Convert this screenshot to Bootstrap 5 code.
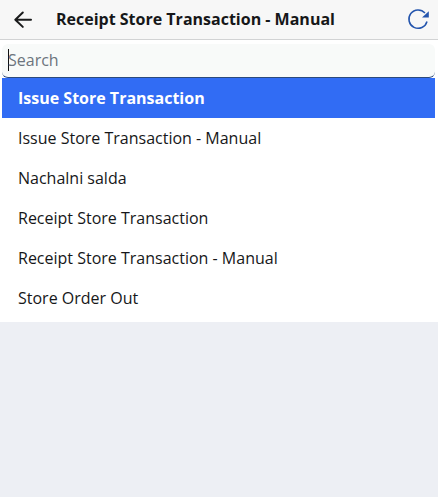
<!DOCTYPE html>
<html lang="en">
<head>
<meta charset="utf-8">
<meta name="viewport" content="width=device-width, initial-scale=1">
<title>Receipt Store Transaction - Manual</title>
<link href="https://cdn.jsdelivr.net/npm/bootstrap@5.3.0/dist/css/bootstrap.min.css" rel="stylesheet">
<style>
body { background: #edeff4; color: #161719; font: 16px/24px "Open Sans", "Noto Sans", sans-serif; min-height: 100vh; overflow: hidden; }
.top-bar { height: 40px; background: #f7f7f7; border-bottom: 1px solid #d2d3d4; padding: 0 7px 1px 12px; }
.top-title { font-size: 16px; line-height: 24px; margin-left: 21px; }
.picker { height: 282px; padding: 4px 3px 4px 2px; }
.search-box { height: 34px; background: #f8faf9; border-bottom: 1px solid #2c4a7c; border-radius: 6px; padding: 0 0 2px 6px; color: #6c747d; }
.caret { width: 1px; height: 22px; margin-right: -1px; background: #111; }
.choices { --bs-list-group-border-radius: 0; --bs-list-group-action-color: #161719; --bs-list-group-active-bg: #316cf4; }
.choices .list-group-item { height: 40px; padding: 8px 16px; border: 0; color: #161719; }
.choices .list-group-item.active { margin: 0; color: #fff; }
</style>
<script src="https://cdn.jsdelivr.net/npm/bootstrap@5.3.0/dist/js/bootstrap.bundle.min.js"></script>
</head>
<body>
<header class="top-bar d-flex align-items-center">
  <a href="#" class="d-flex text-reset" aria-label="Back">
    <svg width="23" height="24" viewBox="0 0 23 24" fill="none" stroke="#1a1b1c" stroke-width="2" stroke-linecap="round" stroke-linejoin="round"><path d="M10.8 5.5 3.3 12.7 10.8 19.9M3.3 12.7H19"/></svg>
  </a>
  <h1 class="top-title mb-0 fw-bold text-nowrap">Receipt Store Transaction - Manual</h1>
  <a href="#" class="d-flex ms-auto" aria-label="Refresh">
    <svg width="24" height="24" viewBox="0 0 24 24"><path d="M18 6A9.2 9.2 0 1 0 20 14.5" fill="none" stroke="#2455ad" stroke-width="1.5"/><path d="M21.8 4.2V10.4H15Z" fill="#2455ad"/></svg>
  </a>
</header>
<main class="picker bg-white">
  <div class="search-box d-flex align-items-center"><span class="caret"></span><span>Search</span></div>
  <div class="list-group choices">
    <a href="#" class="list-group-item list-group-item-action active fw-bold">Issue Store Transaction</a>
    <a href="#" class="list-group-item list-group-item-action">Issue Store Transaction - Manual</a>
    <a href="#" class="list-group-item list-group-item-action">Nachalni salda</a>
    <a href="#" class="list-group-item list-group-item-action">Receipt Store Transaction</a>
    <a href="#" class="list-group-item list-group-item-action">Receipt Store Transaction - Manual</a>
    <a href="#" class="list-group-item list-group-item-action">Store Order Out</a>
  </div>
</main>
</body>
</html>
